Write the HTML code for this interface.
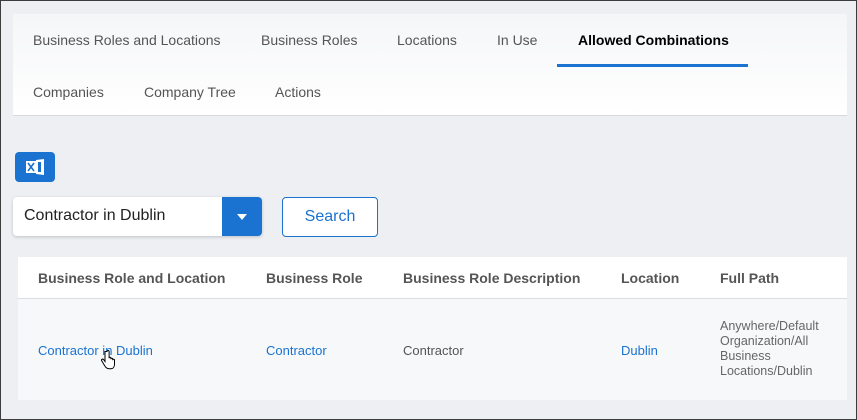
<!DOCTYPE html>
<html><head><style>
*{margin:0;padding:0;box-sizing:border-box}
body{width:857px;height:420px;overflow:hidden;background:#eeeff3;font-family:"Liberation Sans",sans-serif;position:relative}
.frame{position:absolute;left:0;top:0;width:857px;height:420px;border:1px solid #3c3c3c;pointer-events:none}
.a{position:absolute;white-space:nowrap}
.tabs{position:absolute;left:13px;top:14px;width:834px;height:102px;background:linear-gradient(#f5f6f8,#fff);border-bottom:1px solid #d8d9de}
.tab{position:absolute;font-size:14px;color:#555}
.tbl{position:absolute;left:18px;top:257px;width:829px;height:143px;background:#f7f8fa}
.th{position:absolute;top:0;left:0;width:829px;height:42px;background:#fff;border-bottom:1px solid #dcdde2}
.h{position:absolute;top:13px;font-size:14px;font-weight:bold;color:#555}
.c{position:absolute;font-size:13px}
.l{color:#1a73d0}
</style></head><body>
<div class="tabs">
<div class="tab" style="left:20px;top:18px">Business Roles and Locations</div>
<div class="tab" style="left:248px;top:18px">Business Roles</div>
<div class="tab" style="left:384px;top:18px">Locations</div>
<div class="tab" style="left:484px;top:18px">In Use</div>
<div class="tab" style="left:565px;top:18px;color:#000;font-weight:bold">Allowed Combinations</div>
<div style="position:absolute;left:544px;top:50px;width:191px;height:3px;background:#1a73d0"></div>
<div class="tab" style="left:20px;top:70px">Companies</div>
<div class="tab" style="left:131px;top:70px">Company Tree</div>
<div class="tab" style="left:262px;top:70px">Actions</div>
</div>
<div class="a" style="left:15px;top:152px;width:40px;height:30px;background:#1a73d0;border-radius:4px">
<svg width="40" height="30" viewBox="0 0 40 30"><path d="M21 8 L29 7 V23 L21 22 Z" fill="#fff"/><rect x="23" y="10" width="3" height="10" fill="#1a73d0"/><rect x="11" y="9" width="10" height="12" fill="#fff"/><path d="M13 11 L19 19 M19 11 L13 19" stroke="#1a73d0" stroke-width="1.6"/></svg>
</div>
<div class="a" style="left:13px;top:197px;width:249px;height:39px;background:#fff;border-radius:4px;box-shadow:0 1px 3px rgba(0,0,0,.2)">
<div class="a" style="left:11px;top:10px;font-size:16px;color:#222">Contractor in Dublin</div>
<div class="a" style="left:209px;top:0;width:40px;height:39px;background:#1a73d0;border-radius:0 4px 4px 0"><div style="position:absolute;left:15px;top:17px;width:0;height:0;border-left:5px solid transparent;border-right:5px solid transparent;border-top:6px solid #fff"></div></div>
</div>
<div class="a" style="left:282px;top:197px;width:96px;height:40px;border:1px solid #1a73d0;border-radius:4px;background:#fff;color:#1a73d0;font-size:16px;text-align:center;line-height:38px">Search</div>
<div class="tbl">
<div class="th">
<div class="h" style="left:20px">Business Role and Location</div>
<div class="h" style="left:248px">Business Role</div>
<div class="h" style="left:385px">Business Role Description</div>
<div class="h" style="left:603px">Location</div>
<div class="h" style="left:702px">Full Path</div>
</div>
<div class="c l" style="left:20px;top:86px">Contractor in Dublin</div>
<div class="c l" style="left:248px;top:86px">Contractor</div>
<div class="c" style="left:385px;top:86px;color:#555">Contractor</div>
<div class="c l" style="left:603px;top:86px">Dublin</div>
<div class="c" style="left:702px;top:62px;color:#666;font-size:12.5px;line-height:15px;white-space:normal;width:115px">Anywhere/Default Organization/All Business Locations/Dublin</div>
<svg class="a" style="left:82px;top:93px" width="16" height="22" viewBox="0 0 16 22"><path d="M5 1.5 v10 l-1.5-2 c-1-1-2.5 0-1.8 1.2 l3 5 c1 2 2.5 3 4.5 3 h1.5 c2.5 0 3.8-2 3.8-4.5 v-4 c0-1.2-1.8-1.2-1.8 0 v-1 c0-1.2-1.8-1.2-1.8 0 v-1 c0-1.2-1.8-1.2-1.8 0 V1.5 c0-1.3-2.1-1.3-2.1 0z" fill="#fff" stroke="#000" stroke-width="1"/></svg>
</div>
<div class="frame"></div>
</body></html>
